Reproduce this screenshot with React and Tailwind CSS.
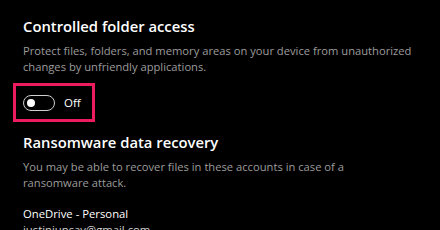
import React from 'react';

const Toggle = ({ label = 'Off' }) => (
  <div className="flex items-center">
    <div className="w-[32px] h-[16px] rounded-full border-[1.5px] border-[#cfcfcf] flex items-center pl-[3px]">
      <div className="w-[8px] h-[8px] rounded-full bg-white"></div>
    </div>
    <span className="ml-[9px] text-[11.5px] leading-[16px] text-white">{label}</span>
  </div>
);

export default function App() {
  return (
    <div
      className="w-[440px] h-[230px] overflow-hidden bg-black pl-[23px] pt-[16px]"
      style={{ fontFamily: '"Open Sans", "Noto Sans", sans-serif' }}
    >
      <h2 className="text-[14.8px] leading-[20px] font-semibold text-white">Controlled folder access</h2>
      <p className="mt-[7px] max-w-[396px] text-[11.2px] leading-[16px] text-[#9c9c9c]">
        Protect files, folders, and memory areas on your device from unauthorized changes by unfriendly applications.
      </p>

      <div className="mt-[8px] -ml-[10px] w-[82px] h-[39px] border-[3px] border-[#ec1c5f] flex items-center pl-[7px]">
        <Toggle />
      </div>

      <h2 className="mt-[10px] text-[14.8px] leading-[20px] font-semibold text-white">Ransomware data recovery</h2>
      <p className="mt-[7px] max-w-[360px] text-[11.2px] leading-[16px] text-[#9c9c9c]">
        You may be able to recover files in these accounts in case of a ransomware attack.
      </p>

      <div className="mt-[15px] text-[11.3px] leading-[16px]">
        <div className="text-white">OneDrive - Personal</div>
        <div className="text-[#d0d0d0]">justinjunsay@gmail.com</div>
      </div>
    </div>
  );
}
